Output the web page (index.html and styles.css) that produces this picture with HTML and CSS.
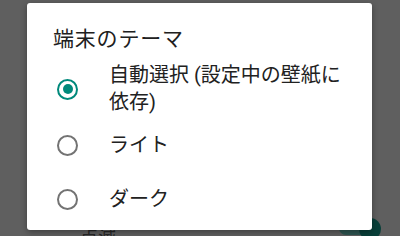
FILE: index.html
```html
<!DOCTYPE html>
<html lang="ja">
<head>
<meta charset="utf-8">
<link rel="stylesheet" href="styles.css">
</head>
<body>
<div class="screen">
  <div class="under">
    <div class="setting-row">
      <span class="setting-label">点滅</span>
      <span class="toggle"><span class="track"></span><span class="thumb"></span></span>
    </div>
  </div>
  <div class="dialog">
    <div class="title">端末のテーマ</div>
    <div class="options">
      <div class="option">
        <span class="radio checked"></span>
        <span class="label">自動選択 (設定中の壁紙に依存)</span>
      </div>
      <div class="option">
        <span class="radio"></span>
        <span class="label">ライト</span>
      </div>
      <div class="option">
        <span class="radio"></span>
        <span class="label">ダーク</span>
      </div>
    </div>
  </div>
</div>
</body>
</html>
```
FILE: styles.css
```css
html, body {
  margin: 0;
  padding: 0;
}
body {
  width: 400px;
  height: 236px;
  overflow: hidden;
  background: #5f5f5f;
  font-family: Roboto, "Noto Sans CJK JP", sans-serif;
}
.screen {
  position: relative;
  width: 400px;
  height: 236px;
  overflow: hidden;
}
.under {
  display: flex;
  flex-direction: column;
  justify-content: flex-end;
  height: 236px;
}
.setting-row {
  display: flex;
  align-items: flex-start;
  justify-content: space-between;
  height: 8px;
  padding-left: 80px;
}
.setting-label {
  font-size: 18px;
  line-height: 1;
  color: #262626;
  margin-top: 1px;
}
.toggle {
  position: relative;
  width: 50px;
  height: 20px;
  margin-top: -10px;
  margin-right: 19px;
}
.track {
  position: absolute;
  left: 8px;
  top: 3px;
  width: 34px;
  height: 14px;
  border-radius: 7px;
  background: #2e5551;
}
.thumb {
  position: absolute;
  right: 0;
  top: 0;
  width: 22px;
  height: 22px;
  border-radius: 50%;
  background: #083f39;
}
.dialog {
  position: absolute;
  left: 27px;
  top: 3px;
  width: 345px;
  height: 227px;
  background: #ffffff;
  border-radius: 3px;
  box-shadow: 0 2px 6px rgba(0, 0, 0, 0.35);
  box-sizing: border-box;
  padding: 24px 24px 0 18px;
}
.title {
  font-size: 21px;
  line-height: 24px;
  color: #202020;
  padding-left: 8px;
  letter-spacing: 0.8px;
}
.options {
  display: flex;
  flex-direction: column;
  margin-top: 9px;
}
.option {
  display: flex;
  align-items: center;
  min-height: 54px;
}
.option:first-child {
  min-height: 58px;
}
.radio {
  flex: none;
  box-sizing: border-box;
  width: 21px;
  height: 21px;
  border-radius: 50%;
  border: 2.2px solid #737373;
  margin-left: 12px;
  margin-right: 31px;
  display: flex;
  align-items: center;
  justify-content: center;
}
.radio.checked {
  border-color: #00897b;
}
.radio.checked::after {
  content: "";
  width: 10px;
  height: 10px;
  border-radius: 50%;
  background: #00897b;
}
.label {
  font-size: 20px;
  line-height: 27px;
  color: #212121;
}
```
